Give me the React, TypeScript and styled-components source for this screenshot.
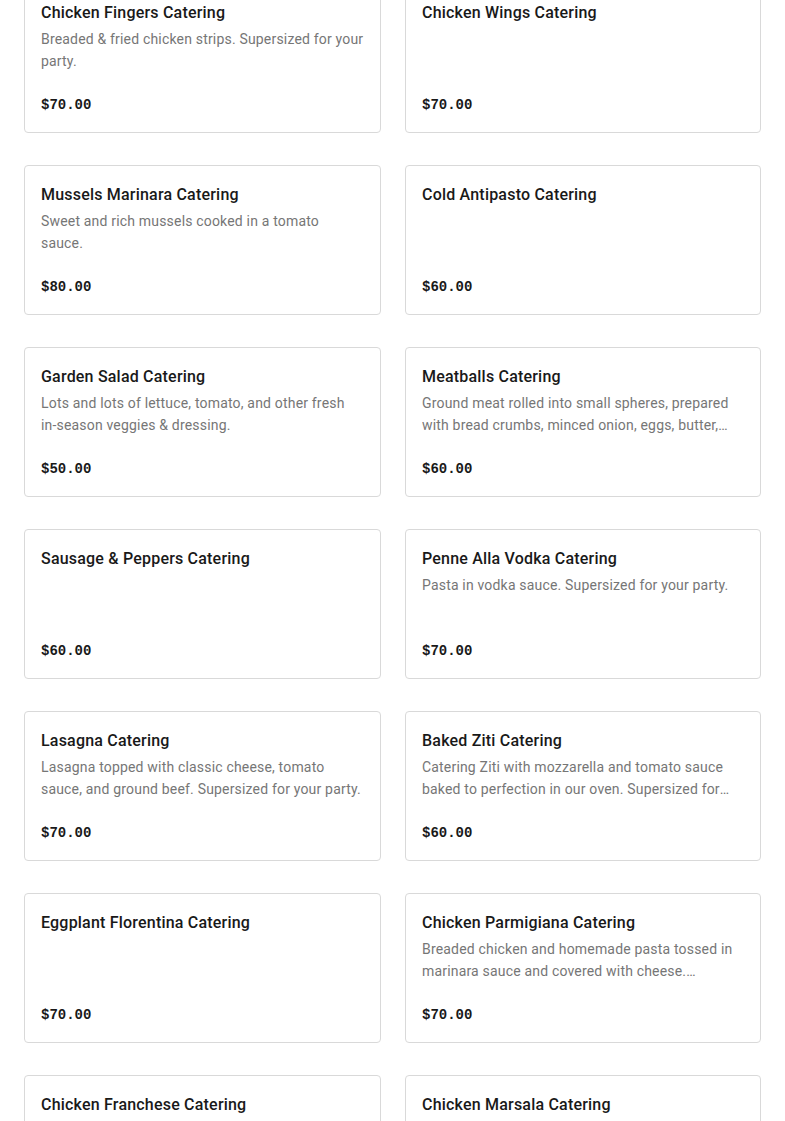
import React from "react";
import styled, { createGlobalStyle } from "styled-components";

interface CateringItem {
  name: string;
  description?: string;
  price: number;
}

const items: CateringItem[] = [
  {
    name: "Chicken Fingers Catering",
    description: "Breaded & fried chicken strips. Supersized for your party.",
    price: 70,
  },
  { name: "Chicken Wings Catering", price: 70 },
  {
    name: "Mussels Marinara Catering",
    description: "Sweet and rich mussels cooked in a tomato sauce.",
    price: 80,
  },
  { name: "Cold Antipasto Catering", price: 60 },
  {
    name: "Garden Salad Catering",
    description:
      "Lots and lots of lettuce, tomato, and other fresh in-season veggies & dressing.",
    price: 50,
  },
  {
    name: "Meatballs Catering",
    description:
      "Ground meat rolled into small spheres, prepared with bread crumbs, minced onion, eggs, butter, and seasoning. Supersized for your party.",
    price: 60,
  },
  { name: "Sausage & Peppers Catering", price: 60 },
  {
    name: "Penne Alla Vodka Catering",
    description: "Pasta in vodka sauce. Supersized for your party.",
    price: 70,
  },
  {
    name: "Lasagna Catering",
    description:
      "Lasagna topped with classic cheese, tomato sauce, and ground beef. Supersized for your party.",
    price: 70,
  },
  {
    name: "Baked Ziti Catering",
    description:
      "Catering Ziti with mozzarella and tomato sauce baked to perfection in our oven. Supersized for your party.",
    price: 60,
  },
  { name: "Eggplant Florentina Catering", price: 70 },
  {
    name: "Chicken Parmigiana Catering",
    description:
      "Breaded chicken and homemade pasta tossed in marinara sauce and covered with cheese. Supersized for your party.",
    price: 70,
  },
  { name: "Chicken Franchese Catering", price: 70 },
  { name: "Chicken Marsala Catering", price: 70 },
];

const GlobalStyle = createGlobalStyle`
  body {
    margin: 0;
    background: #ffffff;
    font-family: "Roboto", "Noto Sans", sans-serif;
  }
`;

const Page = styled.div`
  height: 1121px;
  overflow: hidden;
`;

const Grid = styled.div`
  display: grid;
  grid-template-columns: 357px 356px;
  column-gap: 24px;
  row-gap: 32px;
  padding: 0 24px;
  margin-top: -17px;
`;

const Card = styled.div`
  box-sizing: border-box;
  height: 150px;
  border: 1px solid #d9d9d9;
  border-radius: 4px;
  padding: 16px;
  display: flex;
  flex-direction: column;
  background: #fff;
`;

const Title = styled.h3`
  margin: 1px 0 0;
  font-size: 16px;
  line-height: 24px;
  font-weight: 500;
  color: #191919;
  letter-spacing: 0.2px;
`;

const Description = styled.p`
  margin: 3px 0 0;
  font-size: 14px;
  line-height: 22px;
  color: #767676;
  letter-spacing: 0.18px;
  display: -webkit-box;
  -webkit-line-clamp: 2;
  -webkit-box-orient: vertical;
  overflow: hidden;
`;

// hyphenated words stay together, as in the original
const NoBreak = styled.span`
  white-space: nowrap;
`;

const Price = styled.span`
  margin-top: auto;
  font-family: "Liberation Mono", "DejaVu Sans Mono", monospace;
  font-weight: 700;
  font-size: 14px;
  line-height: 22px;
  color: #191919;
`;

const renderText = (text: string) =>
  text.split(" ").map((word, i) => (
    <React.Fragment key={i}>
      {i > 0 && " "}
      {word.includes("-") ? <NoBreak>{word}</NoBreak> : word}
    </React.Fragment>
  ));

const App = () => {
  return (
    <Page>
      <GlobalStyle />
      <Grid>
        {items.map((item) => (
          <Card key={item.name}>
            <Title>{item.name}</Title>
            {item.description && (
              <Description>{renderText(item.description)}</Description>
            )}
            <Price>${item.price.toFixed(2)}</Price>
          </Card>
        ))}
      </Grid>
    </Page>
  );
};

export default App;
